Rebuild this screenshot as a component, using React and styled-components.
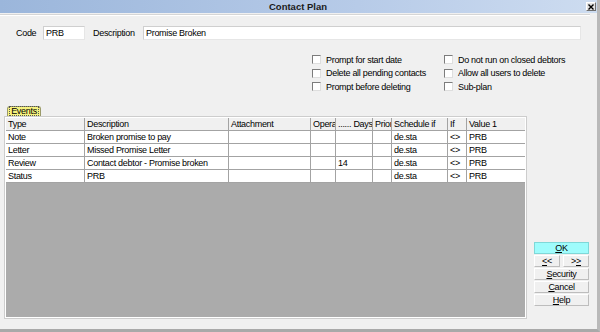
import styled, { createGlobalStyle } from 'styled-components';

const GlobalStyle = createGlobalStyle`
  html, body {
    margin: 0;
    padding: 0;
    background: #f0f0f0;
  }
  * {
    box-sizing: border-box;
  }
`;

const columns = [
  { key: 'type', title: 'Type', width: 79 },
  { key: 'description', title: 'Description', width: 144 },
  { key: 'attachment', title: 'Attachment', width: 82 },
  { key: 'operator', title: 'Opera', width: 25 },
  { key: 'days', title: '...... Days', width: 37 },
  { key: 'priority', title: 'Prior', width: 19 },
  { key: 'schedule', title: 'Schedule if', width: 56 },
  { key: 'if', title: 'If', width: 19 },
  { key: 'value', title: 'Value 1', width: 58 }
];

const events = [
  { type: 'Note', description: 'Broken promise to pay', attachment: '', operator: '', days: '', priority: '', schedule: 'de.sta', if: '<>', value: 'PRB' },
  { type: 'Letter', description: 'Missed Promise Letter', attachment: '', operator: '', days: '', priority: '', schedule: 'de.sta', if: '<>', value: 'PRB' },
  { type: 'Review', description: 'Contact debtor - Promise broken', attachment: '', operator: '', days: '14', priority: '', schedule: 'de.sta', if: '<>', value: 'PRB' },
  { type: 'Status', description: 'PRB', attachment: '', operator: '', days: '', priority: '', schedule: 'de.sta', if: '<>', value: 'PRB' }
];

const options = [
  'Prompt for start date',
  'Do not run on closed debtors',
  'Delete all pending contacts',
  'Allow all users to delete',
  'Prompt before deleting',
  'Sub-plan'
];

const gridTemplate = columns.map(c => `${c.width}px`).join(' ');

const ContactPlan = () => {
  return (
    <Window>
      <TitleBar>
        <TitleSpacer />
        <Title>Contact Plan</Title>
        <CloseButton>
          <svg width="6" height="6" viewBox="0 0 6 6">
            <path d="M0.5 0.5 L5.5 5.5 M5.5 0.5 L0.5 5.5" stroke="#000" strokeWidth="1.4" />
          </svg>
        </CloseButton>
      </TitleBar>
      <Body>
        <Divider />
        <FieldRow>
          <FieldLabel $width={27}>Code</FieldLabel>
          <TextBox $width={42}>PRB</TextBox>
          <FieldLabel $width={50} $offset={8}>Description</FieldLabel>
          <TextBox $width={438}>Promise Broken</TextBox>
        </FieldRow>
        <Options>
          {options.map(label => (
            <Option key={label}>
              <CheckBox />
              <span>{label}</span>
            </Option>
          ))}
        </Options>
        <MainArea>
          <GridColumn>
            <Tab><TabText>Events</TabText></Tab>
            <GridFrame>
              <GridInner>
                <GridRow $header>
                  {columns.map(c => (
                    <HeaderCell key={c.key}>{c.title}</HeaderCell>
                  ))}
                </GridRow>
                {events.map((row, i) => (
                  <GridRow key={i}>
                    {columns.map(c => (
                      <Cell key={c.key}>{row[c.key]}</Cell>
                    ))}
                  </GridRow>
                ))}
              </GridInner>
            </GridFrame>
          </GridColumn>
          <ButtonColumn>
            <Button $primary><u>O</u>K</Button>
            <NavRow>
              <Button $grow><u>&lt;</u>&lt;</Button>
              <Button $grow>&gt;<u>&gt;</u></Button>
            </NavRow>
            <Button><u>S</u>ecurity</Button>
            <Button><u>C</u>ancel</Button>
            <Button><u>H</u>elp</Button>
          </ButtonColumn>
        </MainArea>
      </Body>
    </Window>
  );
};

const Window = styled.div`
  width: 600px;
  height: 332px;
  display: flex;
  flex-direction: column;
  background: #f0f0f0;
  border-right: 3px solid #b9b9b9;
  border-bottom: 3px solid #a9a9a9;
  font-family: "Liberation Sans", Arial, sans-serif;
  font-size: 9px;
  letter-spacing: -0.3px;
  color: #000;
  overflow: hidden;
`;

const TitleBar = styled.div`
  height: 13px;
  flex: none;
  display: flex;
  align-items: center;
  padding: 0 1px 0 0;
  background: linear-gradient(to right, #9bb6db, #b7cbe8 60%, #cddcf0);
`;

const TitleSpacer = styled.div`
  width: 10px;
`;

const Title = styled.div`
  flex: 1;
  text-align: center;
  font-weight: bold;
  font-size: 9.5px;
  letter-spacing: 0;
  color: #1a1a1a;
`;

const CloseButton = styled.div`
  width: 10px;
  height: 9px;
  display: flex;
  align-items: center;
  justify-content: center;
  background: #e4e4e4;
  border: 1px solid;
  border-color: #ffffff #6f6f6f #6f6f6f #ffffff;
`;

const Body = styled.div`
  flex: 1;
  display: flex;
  flex-direction: column;
  min-height: 0;
`;

const Divider = styled.div`
  height: 2px;
  margin: 1px 7px 0 0;
  border-top: 1px solid #d6d6d6;
  border-bottom: 1px solid #ffffff;
`;

const FieldRow = styled.div`
  display: flex;
  align-items: center;
  height: 14px;
  margin-top: 10px;
  padding-left: 16px;
`;

const FieldLabel = styled.span`
  width: ${p => p.$width}px;
  margin-left: ${p => p.$offset || 0}px;
`;

const TextBox = styled.div`
  width: ${p => p.$width}px;
  height: 14px;
  padding: 0 2px;
  line-height: 12px;
  background: #fff;
  border: 1px solid;
  border-color: #cfcfcf #e6e6e6 #e6e6e6 #cfcfcf;
  white-space: nowrap;
`;

const Options = styled.div`
  display: grid;
  grid-template-columns: 132px auto;
  grid-auto-rows: 13.5px;
  margin-top: 13px;
  padding-left: 312px;
`;

const Option = styled.label`
  display: flex;
  align-items: center;
  gap: 5px;
  white-space: nowrap;
`;

const CheckBox = styled.span`
  width: 9px;
  height: 9px;
  flex: none;
  background: #fff;
  border: 1px solid;
  border-color: #7c7c7c #dedede #dedede #7c7c7c;
`;

const MainArea = styled.div`
  flex: 1;
  display: flex;
  min-height: 0;
  margin-top: 12px;
  padding-bottom: 10px;
`;

const GridColumn = styled.div`
  display: flex;
  flex-direction: column;
  padding-left: 4px;
`;

const Tab = styled.div`
  align-self: flex-start;
  margin-left: 3px;
  width: 34px;
  height: 10px;
  display: flex;
  align-items: center;
  justify-content: center;
  background: #f6f27e;
  border: 1px solid #9a9a6a;
  border-bottom: none;
  border-radius: 3px 3px 0 0;
  line-height: 8px;
`;

const TabText = styled.span`
  outline: 1px dotted #555;
  padding: 0 1px;
`;

const GridFrame = styled.div`
  flex: 1;
  width: 523px;
  padding: 1px;
  background: #fff;
  border: 1px solid #cdcdcd;
`;

const GridInner = styled.div`
  height: 100%;
  background: #ababab;
`;

const GridRow = styled.div`
  display: grid;
  grid-template-columns: ${gridTemplate};
  height: 13px;
  background: ${p => (p.$header ? '#f0f0f0' : '#fff')};
`;

const HeaderCell = styled.div`
  padding: 0 2px;
  line-height: 12px;
  overflow: hidden;
  white-space: nowrap;
  border-right: 1px solid #a3a3a3;
  border-bottom: 1px solid #a3a3a3;
  &:last-child {
    border-right: none;
  }
`;

const Cell = styled(HeaderCell)``;

const ButtonColumn = styled.div`
  width: 55px;
  margin-left: 7px;
  display: flex;
  flex-direction: column;
  justify-content: flex-end;
  gap: 1px;
  padding-bottom: 13px;
`;

const NavRow = styled.div`
  display: flex;
  gap: 3px;
`;

const Button = styled.div`
  flex: ${p => (p.$grow ? 1 : 'none')};
  height: 12px;
  display: flex;
  align-items: center;
  justify-content: center;
  background: ${p => (p.$primary ? '#9ffcfc' : '#f0f0f0')};
  border: 1px solid;
  border-color: ${p => (p.$primary ? '#7fd8d8' : '#ffffff #bdbdbd #bdbdbd #ffffff')};
  line-height: 10px;
  white-space: nowrap;
`;

const App = () => (
  <>
    <GlobalStyle />
    <ContactPlan />
  </>
);

export default App;
